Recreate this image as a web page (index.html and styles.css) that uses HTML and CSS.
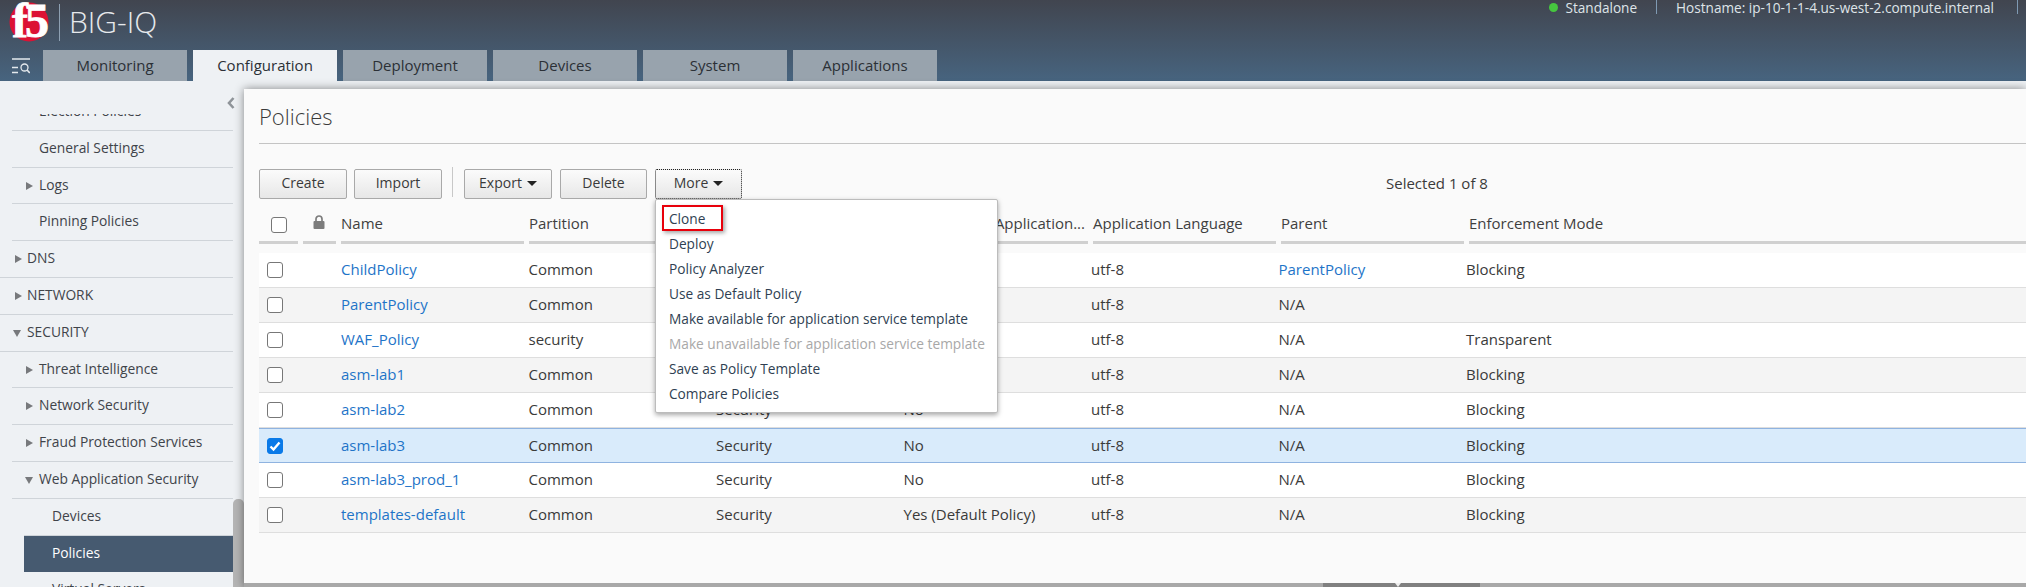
FILE: index.html
```html
<!DOCTYPE html>
<html lang="en">
<head>
<meta charset="utf-8">
<title>BIG-IQ Policies</title>
<link rel="stylesheet" href="styles.css">
</head>
<body>
<header class="header">
  <div class="brand-row">
    <div class="brand">
      <svg class="logo" viewBox="0 0 40 40" width="40" height="40"><circle cx="20" cy="20" r="19.500" fill="#dc1234"/><text x="20" y="35" text-anchor="middle" class="logo-text">f5</text></svg>
      <span class="brand-divider"></span>
      <span class="brand-name">BIG-IQ</span>
    </div>
    <div class="status">
      <span class="dot"></span><span class="status-item">Standalone</span>
      <span class="status-sep"></span><span class="status-item">Hostname: ip-10-1-1-4.us-west-2.compute.internal</span>
      <span class="status-sep status-end"></span>
    </div>
  </div>
  <nav class="tab-row">
    <svg class="menu-icon" viewBox="0 0 18 16" width="18" height="16"><path d="M0 1h18M0 9.500h6M0 14.500h6" stroke="#e4e9ed" stroke-width="1.300" fill="none"/><circle cx="12.500" cy="9.500" r="3.500" stroke="#e4e9ed" stroke-width="1.300" fill="none"/><path d="M15 12l2.800 3" stroke="#e4e9ed" stroke-width="1.600" fill="none"/></svg>
    <a class="tab">Monitoring</a>
    <a class="tab tab-active">Configuration</a>
    <a class="tab">Deployment</a>
    <a class="tab">Devices</a>
    <a class="tab">System</a>
    <a class="tab">Applications</a>
  </nav>
</header>
<main class="main">
  <aside class="sidebar">
    <div class="side-head"><svg viewBox="0 0 8 12" width="8" height="12"><path d="M6.500 1L2 6l4.500 5" stroke="#8f9499" stroke-width="2.600" fill="none"/></svg></div>
    <div class="side-scroll">
      <ul class="side-list">
        <li class="item l2">Election Policies</li>
        <li class="item l2">General Settings</li>
        <li class="item l2 closed">Logs</li>
        <li class="item l2">Pinning Policies</li>
        <li class="item l1 closed">DNS</li>
        <li class="item l1 closed">NETWORK</li>
        <li class="item l1 open">SECURITY</li>
        <li class="item l2 closed">Threat Intelligence</li>
        <li class="item l2 closed">Network Security</li>
        <li class="item l2 closed">Fraud Protection Services</li>
        <li class="item l2 open">Web Application Security</li>
        <li class="item l3">Devices</li>
        <li class="item l3 current">Policies</li>
        <li class="item l3">Virtual Servers</li>
      </ul>
      <div class="side-thumb"></div>
    </div>
  </aside>
  <section class="panel">
    <h1 class="title">Policies</h1>
    <div class="toolbar">
      <button class="btn">Create</button>
      <button class="btn">Import</button>
      <span class="tool-sep"></span>
      <button class="btn">Export<i class="caret"></i></button>
      <button class="btn btn-delete">Delete</button>
      <button class="btn btn-more">More<i class="caret"></i></button>
      <span class="selected">Selected 1 of 8</span>
    </div>
    <div class="thead grid">
      <span class="th th-check"><i class="check"></i></span>
      <span class="th th-lock"><svg viewBox="0 0 12 14" width="12" height="14"><path d="M3 6.500V4a3 3 0 0 1 6 0v2.500" stroke="#7c7c7c" stroke-width="1.700" fill="none"/><rect x="0.500" y="6" width="11" height="8" rx="1" fill="#7c7c7c"/></svg></span>
      <span class="th">Name</span>
      <span class="th">Partition</span>
      <span class="th">Type</span>
      <span class="th th-end">Available to Application...</span>
      <span class="th">Application Language</span>
      <span class="th">Parent</span>
      <span class="th">Enforcement Mode</span>
    </div>
    <div class="tbody">
      <div class="row"><span class="td-check"><i class="check"></i></span><span></span><a class="link">ChildPolicy</a><span>Common</span><span>Security</span><span>No</span><span>utf-8</span><a class="link">ParentPolicy</a><span>Blocking</span></div>
      <div class="row"><span class="td-check"><i class="check"></i></span><span></span><a class="link">ParentPolicy</a><span>Common</span><span>Security</span><span>No</span><span>utf-8</span><span>N/A</span><span></span></div>
      <div class="row"><span class="td-check"><i class="check"></i></span><span></span><a class="link">WAF_Policy</a><span>security</span><span>Security</span><span>No</span><span>utf-8</span><span>N/A</span><span>Transparent</span></div>
      <div class="row"><span class="td-check"><i class="check"></i></span><span></span><a class="link">asm-lab1</a><span>Common</span><span>Security</span><span>No</span><span>utf-8</span><span>N/A</span><span>Blocking</span></div>
      <div class="row"><span class="td-check"><i class="check"></i></span><span></span><a class="link">asm-lab2</a><span>Common</span><span>Security</span><span>No</span><span>utf-8</span><span>N/A</span><span>Blocking</span></div>
      <div class="row row-selected"><span class="td-check"><i class="check checked"><svg viewBox="0 0 16 16" width="16" height="16"><path d="M3.500 8.500l3 3 6-7" stroke="#fff" stroke-width="2.400" fill="none"/></svg></i></span><span></span><a class="link">asm-lab3</a><span>Common</span><span>Security</span><span>No</span><span>utf-8</span><span>N/A</span><span>Blocking</span></div>
      <div class="row"><span class="td-check"><i class="check"></i></span><span></span><a class="link">asm-lab3_prod_1</a><span>Common</span><span>Security</span><span>No</span><span>utf-8</span><span>N/A</span><span>Blocking</span></div>
      <div class="row"><span class="td-check"><i class="check"></i></span><span></span><a class="link">templates-default</a><span>Common</span><span>Security</span><span>Yes (Default Policy)</span><span>utf-8</span><span>N/A</span><span>Blocking</span></div>
    </div>
    <ul class="menu">
      <li class="menu-item"><span class="mark">Clone</span></li>
      <li class="menu-item">Deploy</li>
      <li class="menu-item">Policy Analyzer</li>
      <li class="menu-item">Use as Default Policy</li>
      <li class="menu-item">Make available for application service template</li>
      <li class="menu-item disabled">Make unavailable for application service template</li>
      <li class="menu-item">Save as Policy Template</li>
      <li class="menu-item">Compare Policies</li>
    </ul>
    <div class="resize-handle"><i></i></div>
  </section>
</main>
</body>
</html>
```
FILE: styles.css
```css
*, *::before, *::after { box-sizing: border-box; }
html, body { margin: 0; padding: 0; width: 2026px; height: 587px; overflow: hidden; }
body {
  position: relative;
  font-family: "Open Sans", "Liberation Sans", sans-serif;
  font-size: 14px;
  color: #3a3a3a;
  background: #eef1f4;
}
.header {
  height: 81px;
  background: linear-gradient(#41454f, #47647f);
  display: flex;
  flex-direction: column;
}
.brand-row { height: 50px; display: flex; justify-content: space-between; }
.brand { display: flex; align-items: flex-start; padding: 2px 0 0 9px; }
.logo { overflow: visible; }
.logo-text { font-family: "Liberation Serif", serif; font-weight: 700; font-size: 48px; fill: #fff; stroke: #fff; stroke-width: .8px; letter-spacing: -3px; }
.brand-divider { width: 1px; height: 37px; margin: 2px 9px 0 10px; background: #8ea0b2; }
.brand-name { font-size: 30px; font-weight: 300; line-height: 40px; color: #e6e9ec; }
.status { display: flex; align-items: center; height: 14px; color: #dfe4e8; font-size: 13.600px; padding-right: 8px; }
.dot { width: 9px; height: 9px; border-radius: 50%; background: #46c63f; margin-right: 7px; }
.status-sep { width: 1px; height: 14px; background: #7f9ab3; margin: 0 19px; }
.status-end { margin: 0 0 0 23px; }
.tab-row { height: 31px; display: flex; align-items: flex-end; gap: 6px; padding-left: 12px; }
.menu-icon { align-self: center; margin-right: 7px; }
.tab {
  width: 144px;
  height: 31px;
  line-height: 31px;
  text-align: center;
  font-size: 15px;
  background: #98a3ad;
  color: #2b3036;
}
.tab-active { background: #eef1f4; }
.main { display: flex; height: 506px; }
.sidebar { width: 244px; flex: none; display: flex; flex-direction: column; }
.side-head { height: 33px; flex: none; display: flex; justify-content: flex-end; align-items: flex-start; padding: 16px 9px 0 0; }
.side-scroll { flex: 1; overflow: hidden; position: relative; }
.side-list { list-style: none; margin: -20px 0 0; padding: 0; width: 233px; }
.item {
  height: 36.800px;
  line-height: 34.500px;
  border-bottom: 1px solid #cfd4d9;
  color: #3f444a;
  font-size: 13.800px;
  position: relative;
}
.l1 { padding-left: 27px; }
.l2 { margin-left: 12px; padding-left: 27px; }
.l3 { margin-left: 24px; padding-left: 28px; }
.closed::before, .open::before { content: ""; position: absolute; width: 0; height: 0; }
.closed::before { border-left: 7px solid #77797c; border-top: 4px solid transparent; border-bottom: 4px solid transparent; top: 14px; }
.open::before { border-top: 7px solid #77797c; border-left: 4px solid transparent; border-right: 4px solid transparent; top: 15px; }
.l1.closed::before { left: 15px; }
.l1.open::before { left: 13px; }
.l2.closed::before { left: 14px; }
.l2.open::before { left: 13px; }
.current { background: #465a70; color: #fff; border-bottom-color: #465a70; }
.side-thumb { position: absolute; right: 0; top: 385px; width: 11px; height: 88px; background: #b5b5b5; border-radius: 5px 5px 0 0; }
.panel {
  flex: 1;
  min-width: 0;
  margin-top: 8px;
  background: #fafafa;
  box-shadow: 0 0 9px rgba(0, 0, 0, .45);
  border-bottom: 4px solid #a8a8a8;
  padding-left: 15px;
  position: relative;
}
.title {
  margin: 0;
  height: 55px;
  padding-top: 12px;
  line-height: 30px;
  font-size: 22px;
  font-weight: 300;
  color: #3a3a3a;
  border-bottom: 1px solid #c4c4c4;
}
.toolbar { display: flex; align-items: flex-start; height: 50px; padding-top: 25px; position: relative; }
.btn {
  width: 88px;
  height: 30px;
  margin-right: 7px;
  padding: 0 0 3px;
  font: 14px "Open Sans", "Liberation Sans", sans-serif;
  color: #3a3a3a;
  background: linear-gradient(#fbfbfb, #e7e7e7);
  border: 1px solid #a9a9a9;
  border-radius: 2px;
}
.tool-sep { width: 1px; height: 30px; margin: -2px 11px 0 3px; background: #c8c8c8; }
.btn-delete { width: 87px; margin-left: 1px; margin-right: 8px; }
.btn-more { width: 87px; border: 1px dotted #222; }
.caret { display: inline-block; width: 0; height: 0; margin-left: 5px; vertical-align: 2px; border-top: 5px solid #222; border-left: 5px solid transparent; border-right: 5px solid transparent; }
.selected { position: absolute; left: 1127px; top: 29px; line-height: 20px; font-size: 15px; }
.grid { display: grid; grid-template-columns: 39px 33px repeat(6, 183px) 1fr; column-gap: 5px; }
.thead { height: 36px; margin-top: 23px; }
.th {
  display: block;
  border-bottom: 3px solid #d0d0d0;
  height: 27px;
  line-height: 12px;
  font-size: 15px;
  white-space: nowrap;
  color: #3f3f3f;
}
.th-check .check { margin-left: 12px; }
.th-lock svg { display: block; margin: -2px 0 0 10px; }
.th-end { text-align: right; padding-right: 3px; }
.row {
  display: grid;
  grid-template-columns: 39px 33px repeat(6, 182.500px) 1fr;
  column-gap: 5px;
  height: 35px;
  line-height: 33px;
  font-size: 15px;
  background: #fff;
  border-bottom: 1px solid #dedede;
  white-space: nowrap;
}
.row:nth-child(even) { background: #f4f4f4; }
.row.row-selected { background: #d9ebfb; border-top: 1px solid #8fb3e0; border-bottom: 1px solid #8fb3e0; }
.td-check { display: flex; align-items: center; padding-left: 8px; }
.check { display: block; width: 16px; height: 16px; background: #fff; border: 1px solid #777; border-radius: 3px; }
.check.checked { background: #0a7ae8; border-color: #0a7ae8; }
.check svg { display: block; margin: -1px; }
.link { color: #1e74c8; }
.menu {
  position: absolute;
  left: 411px;
  top: 110px;
  width: 343px;
  height: 214px;
  margin: 0;
  padding: 6px 0 0;
  list-style: none;
  background: #fff;
  border: 1px solid #bcbcbc;
  border-radius: 2px;
  box-shadow: 0 2px 5px rgba(0, 0, 0, .35);
}
.menu-item { height: 25px; line-height: 25px; padding-left: 13px; font-size: 13.700px; color: #2f3f52; white-space: nowrap; }
.disabled { color: #a8a8a8; }
.mark { position: relative; display: inline-block; }
.mark::after { content: ""; position: absolute; left: -7px; top: -1px; width: 61px; height: 26px; border: 2px solid #e8000b; box-shadow: 2px 2px 4px rgba(0,0,0,.35); }
.resize-handle { position: absolute; left: 1079px; bottom: -4px; width: 157px; height: 4px; background: #808080; }
.resize-handle i { position: absolute; left: 72px; top: 0; border-top: 4px solid #eee; border-left: 3px solid transparent; border-right: 3px solid transparent; }
```
